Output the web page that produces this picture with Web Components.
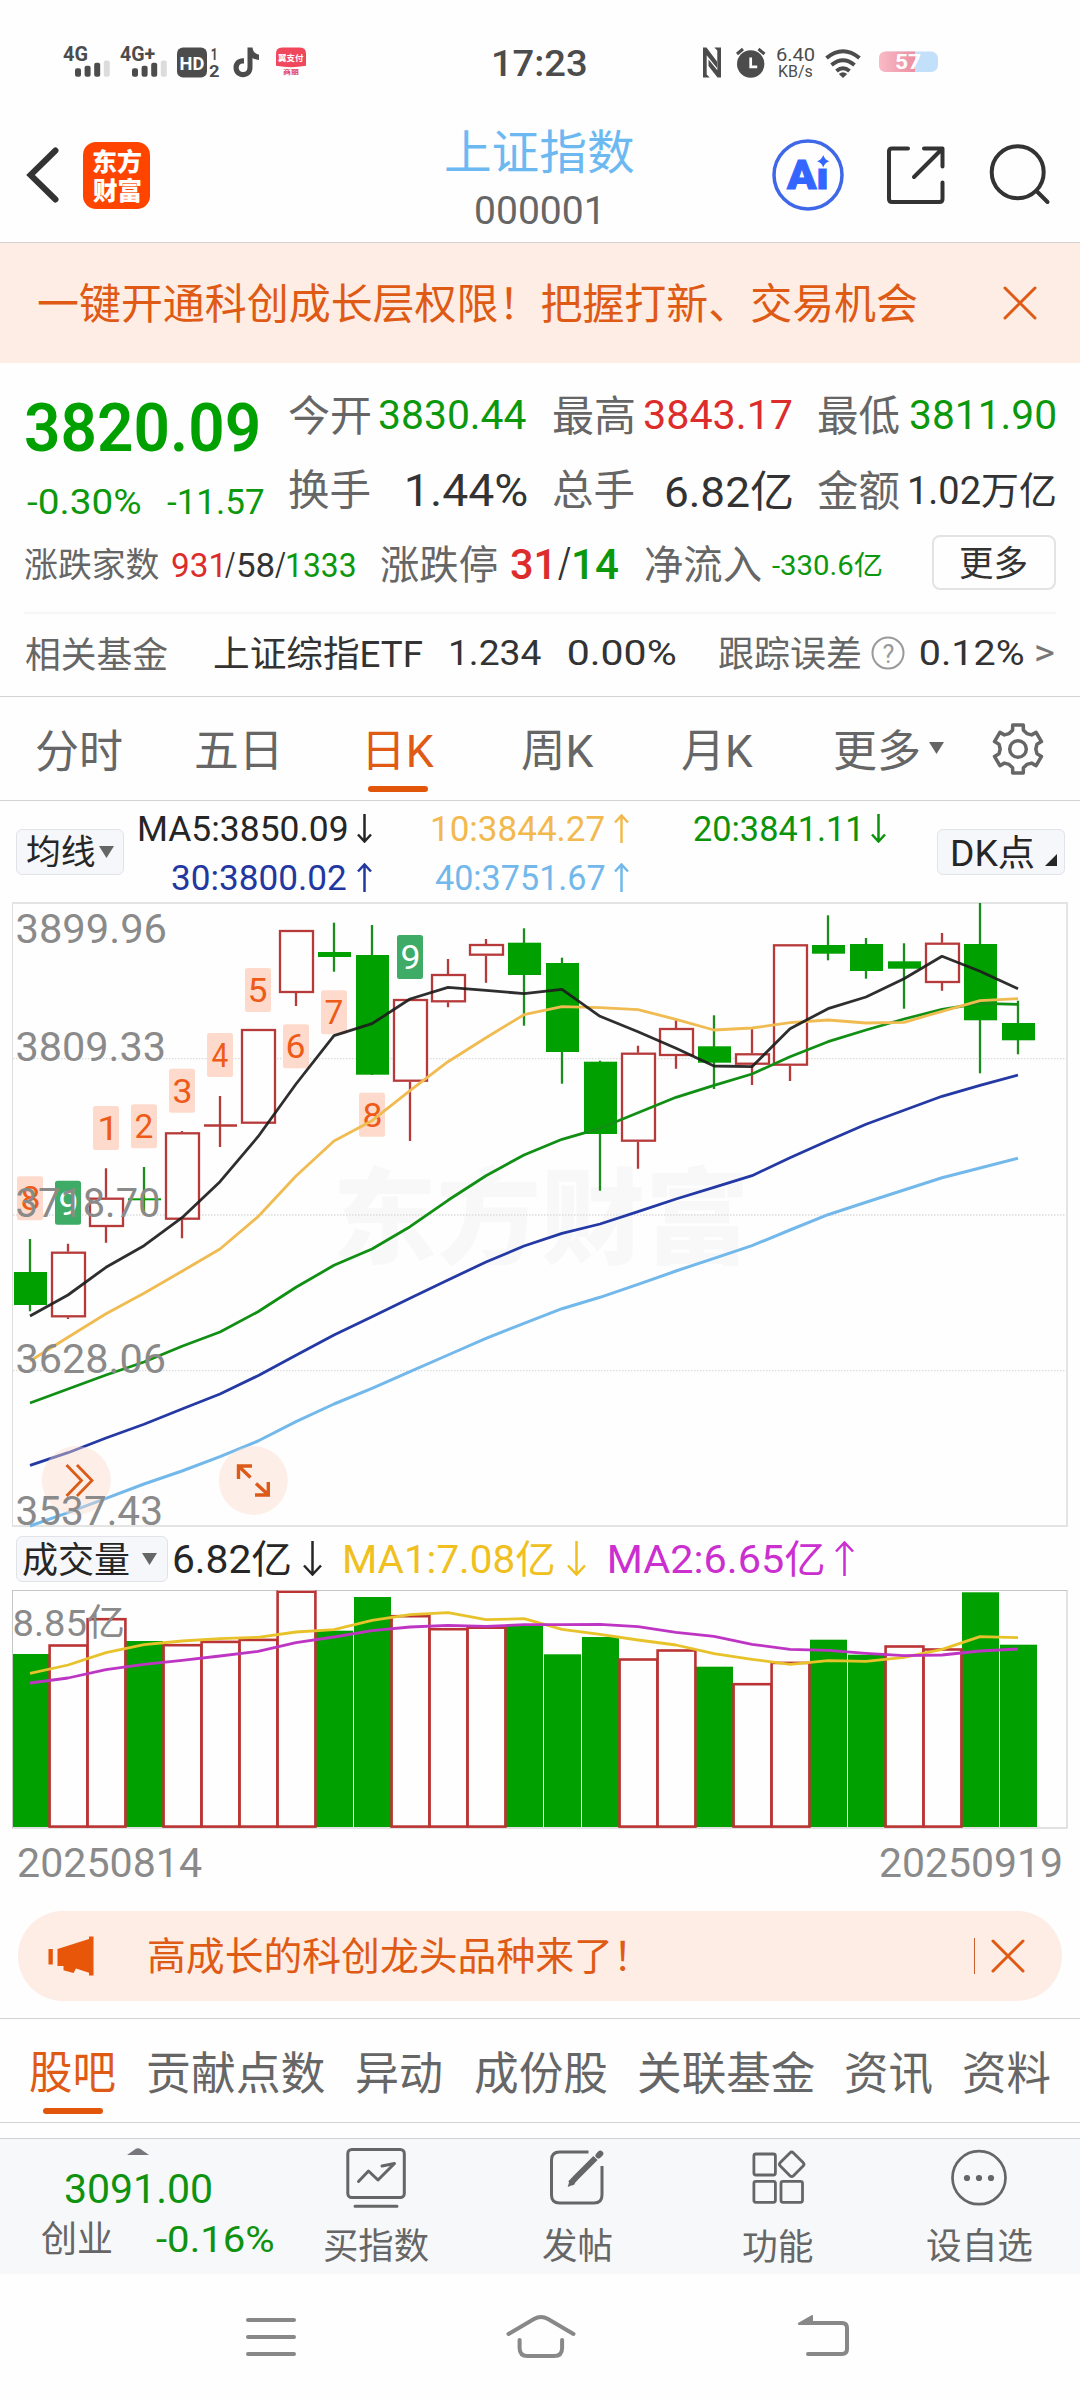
<!DOCTYPE html>
<html lang="zh-CN">
<head>
<meta charset="utf-8">
<title>上证指数 000001</title>
<style>
  html, body { margin: 0; padding: 0; background: #fefefe; }
  body { width: 1080px; font-family: Roboto, "Noto Sans CJK SC", sans-serif; color: #333; }
</style>
</head>
<body>
<stock-page></stock-page>

<script>
const FONT = 'Roboto, "Noto Sans CJK SC", sans-serif';
const ctx = document.createElement('canvas').getContext('2d');
function ink(text, size, weight) {
  ctx.font = `${weight} ${size}px ${FONT}`;
  const m = ctx.measureText(text);
  return {
    left: m.actualBoundingBoxLeft,
    width: m.actualBoundingBoxLeft + m.actualBoundingBoxRight,
    mid: (m.actualBoundingBoxAscent - m.actualBoundingBoxDescent) / 2,
    boxMid: (m.fontBoundingBoxAscent - m.fontBoundingBoxDescent) / 2
  };
}
// SVG label whose glyphs start at x, span w, and are centred on cy
function svgText(text, x, w, cy, size, fill, weight = 400, extra = '') {
  const k = ink(text, size, weight), sx = w / k.width;
  return `<text transform="translate(${x + k.left * sx} ${cy + k.mid}) scale(${sx} 1)" font-family='${FONT}' font-size="${size}" font-weight="${weight}" fill="${fill}" ${extra}>${text}</text>`;
}
// Registers an element from its shadow markup; fill(root) adds the generated parts
function define(name, html, fill) {
  const t = document.createElement('template');
  t.innerHTML = html;
  customElements.define(name, class extends HTMLElement {
    constructor() {
      super();
      const root = this.attachShadow({ mode: 'open' });
      root.appendChild(t.content.cloneNode(true));
      if (fill) fill(root);
    }
  });
}

// Text fitted to a width: s = size, w = glyph width, l = left gap, c = colour, b = weight
customElements.define('fit-text', class extends HTMLElement {
  constructor() {
    super();
    this.attachShadow({ mode: 'open' }).innerHTML =
      `<style>:host{display:block;flex:none}span{display:block;width:max-content;white-space:pre;line-height:1;transform-origin:0 50%}</style><span><slot></slot></span>`;
  }
  connectedCallback() {
    const a = n => this.getAttribute(n);
    const s = +a('s'), b = a('b') || 400, k = ink(this.textContent, s, b);
    const w = a('w') ? +a('w') : k.width, sx = w / k.width;
    Object.assign(this.style, { width: w + 'px', height: s + 'px', fontSize: s + 'px', fontWeight: b });
    if (a('l')) this.style.marginLeft = a('l') + 'px';
    if (a('c')) this.style.color = a('c');
    this.shadowRoot.querySelector('span').style.cssText =
      `height:${s}px;line-height:${s}px;transform:translate(${k.left * sx}px,${k.mid - k.boxMid}px) scaleX(${sx})`;
  }
});

// Thin trend arrow
customElements.define('trend-arrow', class extends HTMLElement {
  connectedCallback() {
    const big = this.hasAttribute('big'), w = big ? 19 : 15, h = big ? 35 : 29, m = w / 2, up = this.getAttribute('dir') === 'up';
    const d = up ? `M${m} ${h}V1.5M1 ${m + 1}L${m} 1.5L${w - 1} ${m + 1}` : `M${m} 0V${h - 1.5}M1 ${h - m - 1}L${m} ${h - 1.5}L${w - 1} ${h - m - 1}`;
    this.attachShadow({ mode: 'open' }).innerHTML =
      `<style>:host{display:block;flex:none;margin-left:${this.getAttribute('l') || 0}px;color:${this.getAttribute('c')}}svg{display:block}</style><svg width="${w}" height="${h}" fill="none" stroke="currentColor" stroke-width="2.5"><path d="${d}"/></svg>`;
  }
});

define('status-bar', `
<style>
:host{display:flex;align-items:center;height:75px;padding-top:25px;color:#4c4c4c}
svg{display:block;flex:none}
.net{display:flex;flex-direction:column;gap:0}
</style>
<svg style="margin-left:63px" width="245" height="34" viewBox="63 45.500 245 34" id="l"></svg>
<fit-text s="37" w="91.5" l="186" b="500">17:23</fit-text>
<svg style="margin-left:117.5px" width="64" height="34" viewBox="703 45.500 64 34">
  <path d="M703.300 77V49q0-2 2-.5l13.500 15.500M721 47v28.500q0 2-2 .5l-13.500-15.500" fill="none"/>
  <path d="M703 77V47h3.500l10.500 14v6.500l-10.300-12.800V74l3 3zM721 47v30h-3.500l-9-11.500V59l8.800 10.800V50l-3-3z" fill="#4c4c4c"/>
  <circle cx="750.7" cy="63.500" r="13.700" fill="#4c4c4c"/>
  <path d="M737 53.500l6-5M764.500 53.500l-6-5" stroke="#4c4c4c" stroke-width="3"/>
  <path d="M750.700 57v9.300h6.500" fill="none" stroke="#fff" stroke-width="2.700"/>
</svg>
<div class="net" style="margin-left:10px"><fit-text s="18" w="38">6.40</fit-text><fit-text s="16" w="33.500" l="2">KB/s</fit-text></div>
<svg style="margin-left:10px" width="36" height="34" viewBox="825 45.500 36 34" fill="none" stroke="#4c4c4c" stroke-width="4">
  <path d="M826.500 57.500Q843 44 859.500 57.500M831.500 64.500Q843 55 854.500 64.500M836.500 70.500Q843 65 849.500 70.500"/><path d="M838.800 73.500q4.200-3.600 8.400 0l-4.200 4z" fill="#4c4c4c" stroke="none"/>
</svg>
<svg style="margin-left:18px" width="60" height="34" viewBox="879 45.500 60 34" id="bat"></svg>`, root => {
  const g = '#4c4c4c';
  const bars = x => [67.7, 65.3, 62.3, 60].map((y, i) => `<rect x="${x + i * 9.6}" y="${y}" width="6" height="${76.3 - y}" rx="2" fill="${i < 3 ? g : '#dcdcdc'}"/>`).join('');
  root.getElementById('l').innerHTML =
    svgText('4G', 63, 24, 52.5, 20.500, g, 700) + bars(75) + svgText('4G+', 120, 35, 52.5, 20.500, g, 700) + bars(132) +
    `<rect x="177" y="47" width="30" height="30" rx="6" fill="${g}"/>` + svgText('HD', 180.500, 23.500, 62.5, 19, '#fff', 700) +
    svgText('1', 211.500, 4.500, 53, 16, g, 700) + svgText('2', 209, 10, 70.500, 16.500, g, 700) +
    `<path d="M247.500 47h5c.4 4 2.600 6.500 6.500 7v5.500c-2.500 0-4.600-.8-6.500-2v9.500c0 13-19 12.800-19 0 0-6 4.700-9.800 10.500-9.200v5.300c-7-1.300-6.800 8.500-.8 8.500 3 0 4.300-1.800 4.300-5z" fill="${g}"/>` +
    `<path d="M276 53q0-6 6-6h18q6 0 6 6v12.300q-8 1.400-15 1.400t-15-1.400z" fill="#f0475c"/>` +
    svgText('翼支付', 278, 26, 57.8, 8.500, '#fff', 700) + svgText('商丽', 283, 16, 71.800, 6, '#e0405a', 700);
  root.getElementById('bat').innerHTML =
    `<defs><linearGradient id="p"><stop offset="0" stop-color="#f9bac6"/><stop offset="1" stop-color="#ec8fa0"/></linearGradient></defs><rect x="879" y="51" width="59" height="20.500" rx="7" fill="#c3e0fb"/><path d="M915 51h-29q-7 0-7 7v6.500q0 7 7 7h29z" fill="url(#p)"/>` +
    svgText('57', 896, 25, 61.300, 21, '#fff', 700);
});

define('app-header', `
<style>
:host{display:flex;align-items:center;padding-top:8px;box-sizing:border-box;border-bottom:1px solid #d3d3d6;height:143px}
svg{display:block;flex:none}
.logo{display:flex;flex-direction:column;align-items:center;justify-content:center;gap:4px;width:67px;height:67px;border-radius:13px;background:#ff4400;margin-left:24px}
.title{display:flex;flex-direction:column;align-items:center;gap:16px;margin:7px 0 0 296px;width:188px}
</style>
<svg style="margin-left:25px" width="34" height="60" viewBox="25 145.500 34 60"><path d="M55.500 151L30.500 175.500L55.500 200" fill="none" stroke="#333" stroke-width="6" stroke-linecap="round"/></svg>
<div class="logo"><fit-text s="25" w="48" b="900" c="#fff">东方</fit-text><fit-text s="25" w="48" b="900" c="#fff">财富</fit-text></div>
<div class="title"><fit-text s="47" w="187.500" c="#6cb9f2">上证指数</fit-text><fit-text s="38.500" w="122" c="#666" style="margin-right:6px">000001</fit-text></div>
<svg style="margin-left:137px" width="74" height="74" viewBox="771.600 138.500 74 74" id="ai"></svg>
<svg style="margin-left:41.400px" width="60" height="60" viewBox="887 145.500 60 60" fill="none" stroke="#333" stroke-width="4" stroke-linecap="round" stroke-linejoin="round"><path d="M909 149h-16q-3 0-3 3v47.500q0 3 3 3h47.500q3 0 3-3V183M925 149h18.500v18M943 149.500L915 177.500"/></svg>
<svg style="margin-left:43px" width="62" height="62" viewBox="990 144.500 62 62" fill="none" stroke="#333" stroke-width="4" stroke-linecap="round"><circle cx="1018.700" cy="172.700" r="26"/><path d="M1038 192l10.500 10.500"/></svg>`, root => {
  root.getElementById('ai').innerHTML =
    `<circle cx="808.600" cy="175.500" r="34" fill="none" stroke="#3f68e8" stroke-width="3.500"/>` +
    svgText('Ai', 786.600, 41.400, 173.500, 40, '#3366ff', 900, 'stroke="#3366ff" stroke-width="1"') +
    `<rect x="814.500" y="155" width="17" height="14" fill="#fefefe"/><path d="M823.800 155.500q1.500 4.700 6 6.200q-4.500 1.500-6 6.200q-1.500-4.700-6-6.200q4.500-1.500 6-6.200z" fill="#3366ff"/>`;
});

define('close-icon', `<style>:host{display:block;flex:none}svg{display:block}</style>
<svg width="34" height="34" fill="none" stroke="#df5a14" stroke-width="3" stroke-linecap="round"><path d="M2 2L32 32M32 2L2 32"/></svg>`);

define('promo-banner', `
<style>:host{display:flex;align-items:center;justify-content:space-between;height:120px;padding:0 43px 0 37.500px;background:#fdede4}</style>
<fit-text s="42" w="879" c="#df5a14">一键开通科创成长层权限！把握打新、交易机会</fit-text><close-icon></close-icon>`);

define('quote-cell', `<style>:host{display:flex;align-items:center;justify-content:space-between;height:75.500px;color:#333}</style><slot></slot>`);

define('quote-panel', `
<style>
:host{display:block;padding:14px 24px 0}
.top{display:flex}
.left{display:flex;flex-direction:column;gap:24px;padding:17px 0 0 2px;width:265px;flex:none;box-sizing:border-box}
.pct{display:flex}
.grid{display:grid;grid-template-columns:237.500px 238.500px 236.500px;column-gap:26.500px}
.row{display:flex;align-items:center;height:72px;padding-left:1px}
.more{display:flex;align-items:center;justify-content:center;width:124px;height:55px;box-sizing:border-box;border:2px solid #e3e3e6;border-radius:8px;margin-left:49.500px;margin-top:-4px}
.fund{display:flex;align-items:center;padding:0 0 4px 1.500px;box-sizing:border-box;border-top:2px solid #f6f6f8;margin-top:12px;height:84px}
svg{display:block;flex:none}
</style>
<div class="top">
  <div class="left"><fit-text s="66" w="232.500" b="600" c="#00a000">3820.09</fit-text>
    <div class="pct"><fit-text s="35" w="114" l="1" c="#0c980c">-0.30%</fit-text><fit-text s="35" w="97" l="26" c="#0c980c">-11.57</fit-text></div></div>
  <div class="grid">
    <quote-cell><fit-text s="42" w="81" c="#666">今开</fit-text><fit-text s="41" w="147.500" c="#0c980c">3830.44</fit-text></quote-cell>
    <quote-cell><fit-text s="42" w="81" c="#666">最高</fit-text><fit-text s="41" w="148" c="#dc2c2c">3843.17</fit-text></quote-cell>
    <quote-cell><fit-text s="42" w="81" c="#666">最低</fit-text><fit-text s="41" w="145" c="#0c980c">3811.90</fit-text></quote-cell>
    <quote-cell><fit-text s="42" w="81" c="#666">换手</fit-text><fit-text s="44" w="120">1.44%</fit-text></quote-cell>
    <quote-cell><fit-text s="42" w="81" c="#666">总手</fit-text><fit-text s="43" w="126">6.82亿</fit-text></quote-cell>
    <quote-cell><fit-text s="42" w="81" c="#666">金额</fit-text><fit-text s="38" w="145">1.02万亿</fit-text></quote-cell>
  </div>
</div>
<div class="row">
  <fit-text s="34.500" w="134" c="#666">涨跌家数</fit-text>
  <fit-text s="33" w="48.500" l="13" c="#dc2c2c">931</fit-text><fit-text s="33" w="10" l="4.500">/</fit-text><fit-text s="33" w="35.500" l="2.500">58</fit-text><fit-text s="33" w="10.500" l="1.500">/</fit-text><fit-text s="33" w="68" l="2" c="#0c980c">1333</fit-text>
  <fit-text s="40" w="116" l="26" c="#666">涨跌停</fit-text>
  <fit-text s="43" w="39" l="14" c="#dc2c2c" b="500">31</fit-text><fit-text s="42" w="13" l="7.500">/</fit-text><fit-text s="43" w="44.500" l="3.500" c="#0c980c" b="500">14</fit-text>
  <fit-text s="40" w="116" l="26.500" c="#666">净流入</fit-text><fit-text s="27" w="110" l="11" c="#0c980c">-330.6亿</fit-text>
  <div class="more"><fit-text s="35" w="67">更多</fit-text></div>
</div>
<div class="fund">
  <fit-text s="36" w="141" c="#666">相关基金</fit-text><fit-text s="36" w="208" l="47.500">上证综指ETF</fit-text>
  <fit-text s="35.500" w="91.500" l="28">1.234</fit-text><fit-text s="35.500" w="106.500" l="27">0.00%</fit-text>
  <fit-text s="36" w="141" l="44" c="#666">跟踪误差</fit-text>
  <svg style="margin-left:11px" width="34" height="34" id="q"></svg>
  <fit-text s="35.500" w="102.500" l="15.500">0.12%</fit-text><fit-text s="36" w="18" l="12.500" c="#777">&gt;</fit-text>
</div>`, root => {
  root.getElementById('q').innerHTML = '<circle cx="17" cy="17" r="15.500" fill="none" stroke="#999" stroke-width="2"/>' + svgText('?', 11.500, 11, 17, 25, '#999');
});

define('tab-item', `<style>:host{display:flex;flex-direction:column;align-items:center;gap:13px;color:#666;flex:none}
i{display:none;width:60px;height:6px;border-radius:3px;background:#e2560a}:host([on]){color:#df5a14}:host([on]) i{display:block}:host([start]) i{align-self:flex-start}</style><slot></slot><i></i>`);

define('period-tabs', `
<style>:host{display:flex;align-items:flex-start;height:105px;box-sizing:border-box;padding:31px 0 0 36px;border-top:1px solid #d3d3d6;border-bottom:1px solid #d3d3d6}svg{display:block;flex:none}</style>
<tab-item><fit-text s="45" w="86">分时</fit-text></tab-item>
<tab-item style="margin-left:74px"><fit-text s="45" w="80.500">五日</fit-text></tab-item>
<tab-item on start style="margin-left:91.500px"><fit-text s="45" w="66.500">日K</fit-text></tab-item>
<tab-item style="margin-left:87.500px"><fit-text s="45" w="72">周K</fit-text></tab-item>
<tab-item style="margin-left:87.500px"><fit-text s="45" w="71.500">月K</fit-text></tab-item>
<tab-item style="margin-left:81.500px"><fit-text s="44" w="84">更多</fit-text></tab-item>
<svg style="margin:14px 0 0 10px" width="15" height="12"><path d="M0 0h15L7.500 12z" fill="#666"/></svg>
<svg style="margin:-6px 0 0 47px" width="54" height="54" viewBox="-27 -27 54 54" id="gear"></svg>`, root => {
  const p = [];
  for (let i = 0; i < 6; i++) {
    const a = i * 60 - 90;
    [[-12.5, 24.6], [12.5, 24.6], [16, 19.6], [30, 17.8], [44, 19.6]].forEach(([o, r]) => {
      const t = (a + o) * Math.PI / 180; p.push((r * Math.cos(t)).toFixed(1) + ',' + (r * Math.sin(t)).toFixed(1));
    });
  }
  root.getElementById('gear').innerHTML = `<g fill="none" stroke="#666" stroke-width="3.500" stroke-linejoin="round"><polygon points="${p.join(' ')}"/><circle r="8.300"/></g>`;
});

define('menu-button', `<style>:host{display:flex;align-items:center;flex:none;box-sizing:border-box;height:46px;border:1.500px solid #e1e3e8;border-radius:6px;background:#f6f7fa;color:#262626}</style><slot></slot>`);

define('ma-legend', `
<style>:host{display:flex;align-items:center;height:101px;color:#262626}
svg{display:block;flex:none}.lines{width:798px;padding-left:15px;display:flex;flex-direction:column;height:97.200px;margin-top:3px}
.lines div{display:flex;align-items:center;height:48.600px}</style>
<menu-button style="margin-left:16px;width:108px"><fit-text s="34.500" w="68" l="10">均线</fit-text><svg style="margin-left:4px" width="15" height="12"><path d="M0 0h15L7.500 12z" fill="#666"/></svg></menu-button>
<div class="lines">
<div><fit-text s="35" w="208">MA5:3850.09</fit-text><trend-arrow l="10" c="#262626"></trend-arrow>
<fit-text s="35" w="172.500" l="60" c="#f2b94e">10:3844.27</fit-text><trend-arrow dir="up" l="9.500" c="#f2b94e"></trend-arrow>
<fit-text s="35" w="164" l="65" c="#0c930c">20:3841.11</fit-text><trend-arrow l="13" c="#0c930c"></trend-arrow></div>
<div><fit-text s="35" w="174" l="33" c="#2238a0">30:3800.02</fit-text><trend-arrow dir="up" l="11" c="#2238a0"></trend-arrow>
<fit-text s="35" w="170" l="62.500" c="#72b8ea">40:3751.67</fit-text><trend-arrow dir="up" l="9.500" c="#72b8ea"></trend-arrow></div>
</div>
<menu-button style="width:127.500px"><fit-text s="36" w="82" l="14">DK点</fit-text><svg style="margin:17px 0 0 11px" width="12" height="12"><path d="M12 0v12H0z" fill="#262626"/></svg></menu-button>`);

const X = i => 30 + 38 * i;
const line = (ys, c, w = 2.8) => `<polyline points="${ys.map((y, i) => X(i) + ',' + y).join(' ')}" fill="none" stroke="${c}" stroke-width="${w}" stroke-linejoin="round"/>`;

customElements.define('k-chart', class extends HTMLElement {
  connectedCallback() {
    // colour, high, body top, body bottom, low (as y positions)
    const K = [['g',1239,1272,1305,1311.3],['r',1243.7,1251.7,1317.3,1319],['r',1168.3,1197.7,1227,1242.7],['g',1167,1198.3,1200.3,1213.3],['r',1131,1132.3,1219.7,1238.3],['r',1096,1124.3,1126.7,1147],['r',1029,1029,1123.7,1123.7],['r',930,930,993,1006],['g',922.7,952,957,971.7],['g',925,955,1074.7,1075],['r',999,999,1081.7,1141],['r',959,974,1002.3,1007.3],['r',939,944,955.7,982.7],['g',928.3,942.7,975,1025.7],['g',957.7,963,1052,1083.7],['g',1060.7,1061.7,1134,1190.7],['r',1045.7,1052.7,1141.7,1168.7],['r',1019.3,1028,1056,1068.7],['g',1015.3,1046.3,1062.7,1089],['r',1028.7,1053.3,1064.7,1085],['r',944.3,944.3,1065.7,1081],['g',915.3,945,953.7,960.3],['g',938,944,971,978.7],['g',943.3,961.3,968.7,1008.7],['r',933,942.7,983,990.7],['g',903,944,1020.3,1073.3],['g',1000.7,1023,1040.3,1054.3]];
    const G = '#00a000', R = '#b73a3a';
    let s = '';
    s += svgText('东方财富', 337.5, 406, 1215, 104, '#f8f8f9', 900);
    [1058.7, 1215, 1370.7].forEach(y => s += `<path d="M13 ${y}H1067" stroke="#dcdcdc" stroke-width="1.300" stroke-dasharray="1.500 1.500"/>`);
    s += `<path d="M12.500 903V1526" stroke="#dedede" stroke-width="1"/><path d="M12 903H1067V1526H12" fill="none" stroke="#e4e4e4" stroke-width="2"/>`;
    K.forEach(([c, h, t, b, l], i) => {
      const x = X(i);
      if (c === 'g') {
        s += `<path d="M${x} ${h}V${l}" stroke="#1c8c1c" stroke-width="2.300"/><rect x="${x - 16}" y="${t}" width="33" height="${b - t}" fill="${G}"/>`;
      } else if (b - t < 3) {
        s += `<path d="M${x} ${h}V${l}M${x - 16} ${(t + b) / 2}h33" stroke="${R}" stroke-width="2.300"/>`;
      } else {
        s += `<path d="M${x} ${h}V${t}M${x} ${b}V${l}" stroke="${R}" stroke-width="2.300"/><rect x="${x - 16}" y="${t + 1}" width="33" height="${b - t - 2}" fill="#fefefe" stroke="${R}" stroke-width="2.300"/>`;
      }
    });
    [[2,1106,1],[3,1104.3,2],[4,1068.7,3],[5,1033,4],[6,968,5],[7,1024.3,6],[8,990.3,7],[9,1092.7,8],[10,935,9,1],[0,1176.3,8],[1,1180.7,9,1]].forEach(([i, y, n, gr]) => {
      const x = X(i);
      s += `<rect x="${x - 13}" y="${y}" width="26" height="44" rx="2.500" fill="${gr ? '#3eac66' : '#fddacb'}"/>` + svgText('' + n, x - (n === 1 ? 6.500 : 8.500), n === 1 ? 11.5 : 17, y + 22, 33.500, gr ? '#fff' : '#ee5a18');
    });
    s += line([1526,1512.7,1498.3,1484,1471,1456.7,1441,1421.7,1404,1388.3,1371.7,1355,1338.3,1323.3,1308.7,1297.3,1284.3,1271,1258.3,1245.7,1230,1214.7,1202.3,1190,1177.7,1168,1158.3], '#72b8ea', 3);
    s += line([1465.3,1452.7,1438,1424.3,1409,1394,1375.7,1355.3,1335,1316.7,1298.3,1280,1262,1246,1233.3,1224,1211.7,1199,1187.3,1175.7,1157.7,1140.7,1124.3,1110.3,1096.3,1085.3,1075], '#2439a4');
    s += line([1403,1389,1375,1362,1346.3,1332,1311.7,1287.3,1265.3,1249,1226.7,1200.3,1175.7,1155,1139.3,1128.3,1112.7,1097.3,1085.3,1074,1056.7,1041.7,1030,1019,1009.3,1003.3,1004.3], '#108f14');
    s += line([1361,1337.3,1313.7,1293.3,1271.3,1249,1216.7,1176,1141,1120.7,1090.7,1061.7,1037.7,1014.7,1006.7,1007.7,1009.7,1019.3,1030,1028,1022.7,1020,1023,1022.3,1011.3,1000.7,998.7], '#f0bb50');
    s += `<g opacity=".92">` + line([1316,1295,1267.3,1245.7,1217.7,1181.7,1136.7,1084,1035.7,1023.7,999,987.3,990.3,993.7,989.3,1016.3,1031.7,1048.3,1066,1066.7,1028.7,1008.7,997,978.7,956.3,971.3,988.7], '#1c1c1c') + '</g>';
    s += `<g fill="#fddccb" fill-opacity=".42"><circle cx="76.300" cy="1480.500" r="34.500"/><circle cx="253.300" cy="1480.500" r="34.500"/></g>
      <g fill="none" stroke="#dc5b18" stroke-width="2.800"><path d="M66.500 1465L81.500 1480.500L66.500 1496M77 1465L92 1480.500L77 1496"/></g>
      <g fill="none" stroke="#dc5b18" stroke-width="3.400"><path d="M252 1466H238.500V1479M239 1466.500L250.500 1477.500M255 1495H268.300V1482M268 1494.500L256 1483.500"/></g>`;
    [['3899.96',149.5,928.3],['3809.33',147.5,1046.7],['3718.70',142,1202.3],['3628.06',148.5,1358.3],['3537.43',144.5,1510.7]].forEach(([t, w, y]) => s += svgText(t, 16.5, w, y, 41, '#8a8a8a'));
    this.attachShadow({ mode: 'open' }).innerHTML = `<style>:host{display:block;height:625px}svg{display:block;overflow:visible}</style><svg width="1080" height="625" viewBox="0 902 1080 625">${s}</svg>`;
  }
});

define('volume-legend', `
<style>:host{display:flex;align-items:center;height:63px;color:#262626}svg{display:block}</style>
<menu-button style="margin-left:16px;width:151.500px"><fit-text s="36" w="106" l="6">成交量</fit-text><svg style="margin-left:13px" width="15" height="12"><path d="M0 0h15L7.500 12z" fill="#666"/></svg></menu-button>
<fit-text s="39" w="116" l="6.500">6.82亿</fit-text><trend-arrow big l="12.500" c="#262626"></trend-arrow>
<fit-text s="39" w="208.500" l="23" c="#efc020">MA1:7.08亿</fit-text><trend-arrow big l="13.500" c="#efc020"></trend-arrow>
<fit-text s="39" w="213.500" l="24" c="#cb2fcf">MA2:6.65亿</fit-text><trend-arrow big dir="up" l="12" c="#cb2fcf"></trend-arrow>`);

customElements.define('volume-chart', class extends HTMLElement {
  connectedCallback() {
    // top of each bar; negative marks a rising day (outlined)
    const V = [1654,-1644.3,-1618,1641,-1644,-1640.7,-1638.7,-1590.5,1630.7,1597,-1615,-1628,-1626.5,1624.5,1654.3,1637,-1658.3,-1649.3,1666.7,-1683,-1661.7,1639.7,1654.7,-1645.3,-1648.3,1592.3,1644.7];
    let s = `<rect x="12.500" y="1590.500" width="1054.500" height="237.500" fill="none" stroke="#c6c6c6"/>`;
    V.forEach((v, i) => {
      const x = X(i);
      if (v > 0) s += `<rect x="${x - 18 + (i ? 0 : 1)}" y="${v}" width="${i ? 37 : 36}" height="${1827 - v}" fill="#00a000"/>`;
    });
    V.forEach((v, i) => {
      const x = X(i), y = -v;
      if (v < 0) s += `<rect x="${x - 18.4}" y="${y + 1.2}" width="37.800" height="${1827 - y - 1.6}" fill="#fefefe" stroke="#bb3434" stroke-width="2.600"/>`;
    });
    s += '<path d="M278 1590.500H315" stroke="#d8a8a8" stroke-width="1"/>';
    s += line([1673.3,1665,1652.7,1644.7,1641,1638.7,1637.3,1632,1629.7,1620.3,1614.7,1612.7,1619.7,1618.7,1629.3,1634.3,1640,1645,1653.7,1659.3,1664.3,1660.7,1661.3,1657.3,1649.3,1636.7,1637.7], '#e8c22a');
    s += line([1683,1678,1669.7,1664.3,1660.3,1656,1651.3,1642.7,1637,1630.7,1627,1625.3,1626.3,1624.7,1624.7,1624.3,1626.7,1632.3,1636.3,1644.3,1649.3,1650.3,1653.3,1655.7,1655,1651,1649], '#bf35c3');
    s += svgText('8.85亿', 14.5, 108.5, 1621, 37, '#8a8a8a');
    this.attachShadow({ mode: 'open' }).innerHTML = `<style>:host{display:block;height:239px}svg{display:block}</style><svg width="1080" height="239" viewBox="0 1590 1080 239">${s}</svg>`;
  }
});

define('date-axis', `<style>:host{display:flex;justify-content:space-between;align-items:center;height:66px;padding:0 19px 0 18px;color:#8a8a8a}</style>
<fit-text s="41" w="184">20250814</fit-text><fit-text s="41" w="181">20250919</fit-text>`);

define('notice-bar', `
<style>:host{display:flex;align-items:center;height:90px;margin:16px 18px 17px;border-radius:45px;background:#fdede4;box-sizing:border-box;padding:0 37px 0 30px}
svg{display:block}i{width:1px;height:36px;background:#c9612e;margin-left:auto;margin-right:16px}</style>
<svg width="46" height="40" viewBox="47.500 1935.500 46 40" fill="#e8560a"><path d="M48 1948.500h4.300v15.500H48zM57 1948.500L88.500 1938.500V1936H93v39h-4.500v-2.800L75.500 1968l-2.500 4.500l-10-2.700v-4.300h-6z"/></svg>
<fit-text s="38.500" w="477" l="55" c="#df5a14">高成长的科创龙头品种来了！</fit-text><i></i><close-icon></close-icon>`);

define('section-tabs', `
<style>:host{display:flex;align-items:flex-start;height:105px;box-sizing:border-box;padding:31px 0 0 30px;border-top:1px solid #d3d3d6;border-bottom:1px solid #d3d3d6}tab-item+tab-item{margin-left:32px}</style>
<tab-item on><fit-text s="45" w="85">股吧</fit-text></tab-item>
<tab-item style="margin-left:33px"><fit-text s="45" w="176.500">贡献点数</fit-text></tab-item>
<tab-item><fit-text s="45" w="84">异动</fit-text></tab-item>
<tab-item style="margin-left:34px"><fit-text s="45" w="132">成份股</fit-text></tab-item>
<tab-item><fit-text s="45" w="175.500">关联基金</fit-text></tab-item>
<tab-item><fit-text s="45" w="86">资讯</fit-text></tab-item>
<tab-item><fit-text s="45" w="86">资料</fit-text></tab-item>`);

define('tool-item', `<style>:host{display:flex;flex-direction:column;align-items:center;gap:18px;width:201px;padding-top:6px}</style><slot></slot>`);
define('tool-bar', `
<style>:host{display:flex;height:136px;box-sizing:border-box;border-top:1px solid #d0d2d5;background:#f7f8fa;margin-top:15px;color:#666}
svg{display:block;flex:none}.idx{width:275.500px;padding-top:9px;box-sizing:border-box;display:flex;flex-direction:column}.r{display:flex;margin-top:11px}</style>
<div class="idx">
  <svg style="margin-left:127px" width="22" height="7"><path d="M0 7L8.500 1q2.500-1.600 5 0L22 7z" fill="#76767c"/></svg>
  <fit-text s="41" w="146" l="65.400" c="#0f920f" style="margin-top:13px">3091.00</fit-text>
  <div class="r"><fit-text s="36" w="70" l="41">创业</fit-text><fit-text s="37" w="117.500" l="45" c="#0f920f">-0.16%</fit-text></div>
</div>
<tool-item><svg width="64" height="64" viewBox="344 2145 64 64" fill="none" stroke="#666" stroke-width="3" stroke-linecap="round" stroke-linejoin="round"><rect x="347.800" y="2149.500" width="56.500" height="48" rx="4"/><path d="M355 2206.300H397M358.500 2181.500L368.500 2171L378 2180L394.500 2163.500L382 2166"/></svg><fit-text s="36" w="104">买指数</fit-text></tool-item>
<tool-item><svg width="64" height="64" viewBox="545.500 2145 64 64" fill="none" stroke="#666" stroke-width="3"><path d="M589 2152H560q-8 0-8 8v35q0 8 8 8h34.500q8 0 8-8V2166"/><path d="M596 2158L576 2178L571 2183.500" stroke-width="6"/><path d="M568.200 2187l2-7l5.500 4z" fill="#666" stroke="none"/><path d="M599 2155.500l1.800-1.800" stroke-width="6" stroke-linecap="round"/></svg><fit-text s="36" w="69">发帖</fit-text></tool-item>
<tool-item><svg width="64" height="64" viewBox="746 2145 64 64" fill="none" stroke="#666" stroke-width="2.800"><rect x="753.900" y="2154" width="21.500" height="21" rx="2"/><rect x="753.900" y="2181.300" width="21.500" height="21" rx="2"/><rect x="781" y="2181.300" width="21.500" height="21" rx="2"/><rect x="782.400" y="2155" width="18.600" height="18.600" rx="2.500" transform="rotate(45 791.700 2164.300)"/></svg><fit-text s="36" w="69.500">功能</fit-text></tool-item>
<tool-item><svg width="64" height="64" viewBox="947 2145 64 64"><circle cx="979" cy="2177.700" r="26.500" fill="none" stroke="#666" stroke-width="2.700"/><g fill="#666"><circle cx="967" cy="2178" r="3.100"/><circle cx="979" cy="2178" r="3.100"/><circle cx="991" cy="2178" r="3.100"/></g></svg><fit-text s="36" w="105">设自选</fit-text></tool-item>`);

define('system-nav', `
<style>:host{display:flex;align-items:center;height:126px}svg{display:block;flex:none}</style>
<svg style="margin-left:241px" width="60" height="60" viewBox="241 2307 60 60" stroke="#888" stroke-width="4" stroke-linecap="round"><path d="M248 2320H294M248 2337H294M248 2354H294"/></svg>
<svg style="margin-left:200px" width="80" height="60" viewBox="501 2307 80 60" fill="none" stroke="#888" stroke-width="4" stroke-linecap="round"><path d="M508.500 2334L534 2319q7-4 14 0L573.500 2334M519.600 2340V2348q0 8 8 8h26.500q8 0 8-8V2340"/></svg>
<svg style="margin-left:211px" width="60" height="60" viewBox="792 2307 60 60" fill="none" stroke="#888" stroke-width="4" stroke-linecap="round"><path d="M806 2323H842q5 0 5 5v21q0 5-5 5H808"/><path d="M798 2323L812 2315q1-.5 1 1v9h-14q-2-.5-1-2z" fill="#888" stroke="none"/></svg>`);

define('stock-page', `
<style>:host{display:block;width:1080px;height:2400px;overflow:hidden;background:#fefefe}</style>
<status-bar></status-bar><app-header></app-header><promo-banner></promo-banner><quote-panel></quote-panel>
<period-tabs></period-tabs><ma-legend></ma-legend><k-chart></k-chart><volume-legend></volume-legend><volume-chart></volume-chart>
<date-axis></date-axis><notice-bar></notice-bar><section-tabs></section-tabs><tool-bar></tool-bar><system-nav></system-nav>`);
</script>
</body>
</html>
